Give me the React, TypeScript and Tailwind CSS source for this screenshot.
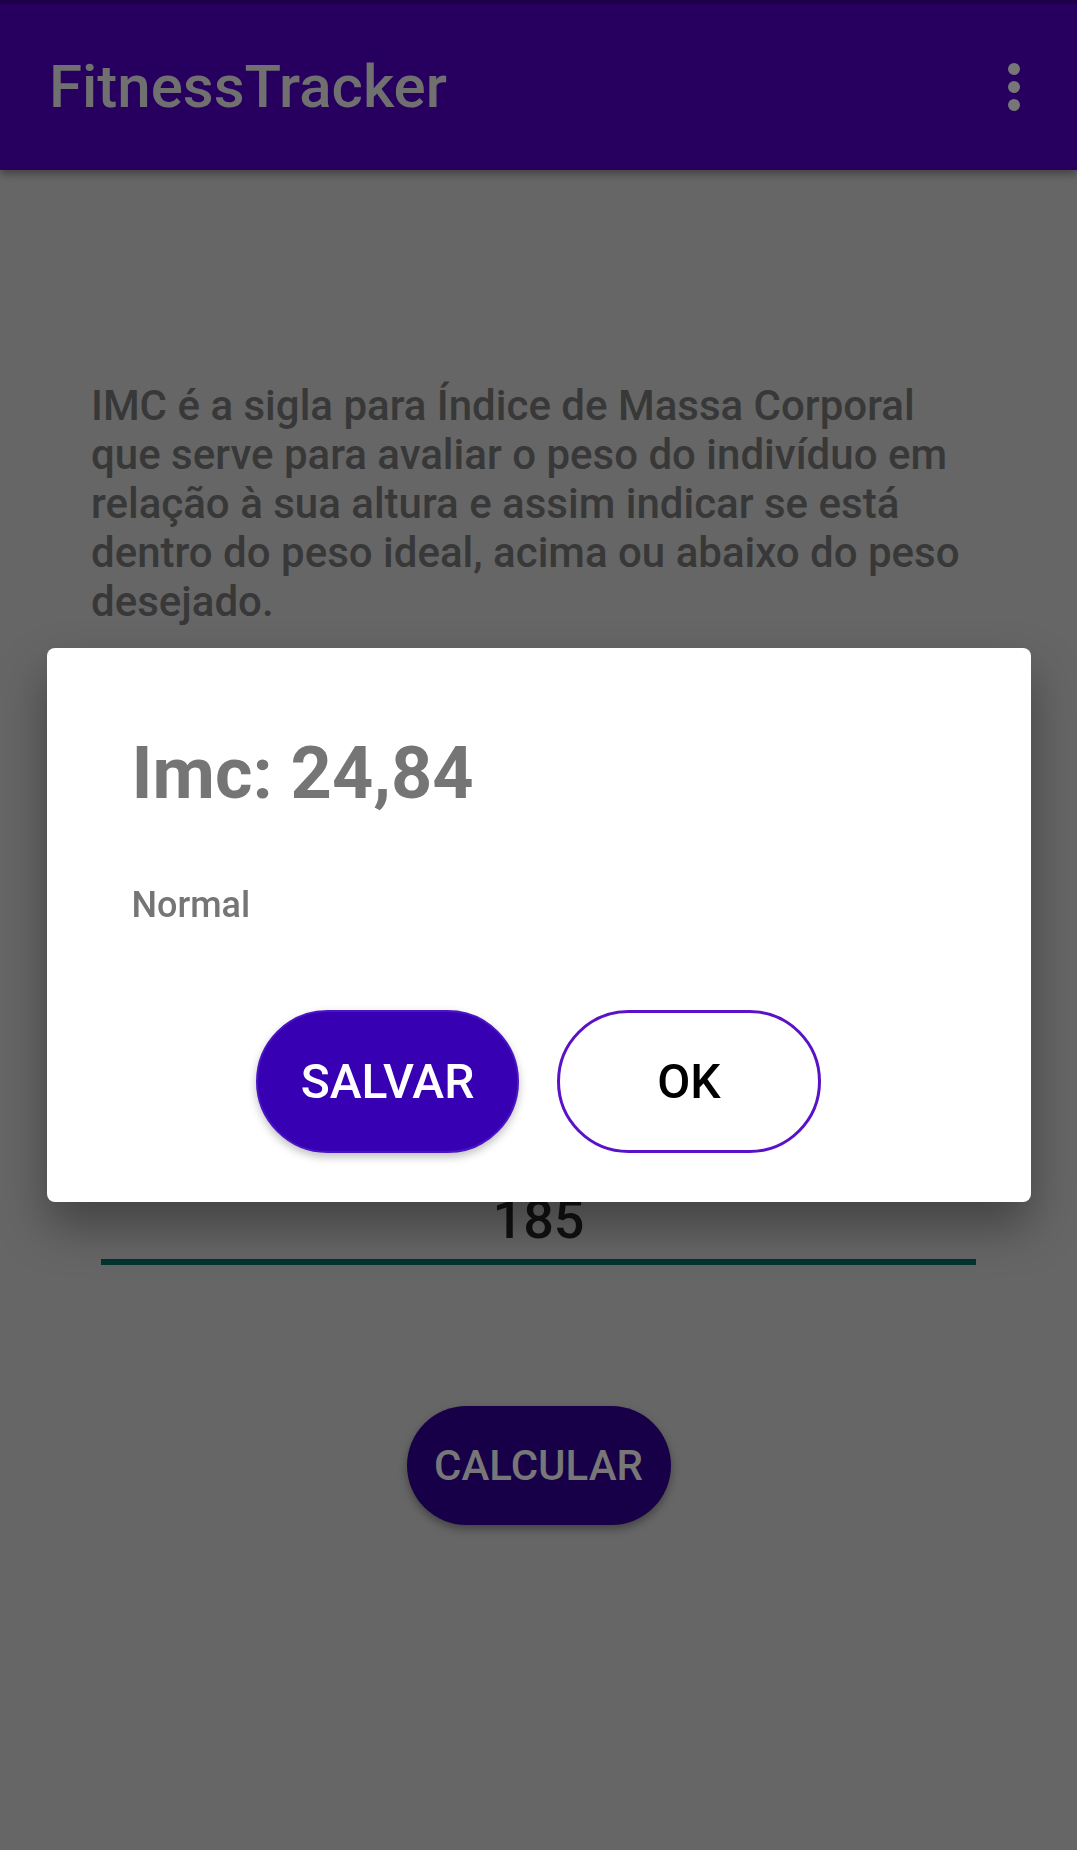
import React from "react"

const roboto = "font-['Roboto','Liberation_Sans',sans-serif]"

function OverflowDots() {
  return (
    <div className="flex flex-col items-center gap-[6px]">
      <span className="block h-[12px] w-[12px] rounded-full bg-[#777777]" />
      <span className="block h-[12px] w-[12px] rounded-full bg-[#777777]" />
      <span className="block h-[12px] w-[12px] rounded-full bg-[#777777]" />
    </div>
  )
}

function ResultDialog() {
  return (
    <div className="fixed inset-0 flex items-center justify-center">
      <div className="flex h-[554px] w-[984px] flex-col rounded-[8px] bg-white px-[85px] pt-[90px] pb-[49px] shadow-[0_24px_48px_rgba(0,0,0,0.35)]">
        <h2 className="text-[72px] leading-none font-bold text-[#757575]">Imc: 24,84</h2>
        <p className="mt-[77px] text-[36px] leading-none font-medium text-[#757575]">Normal</p>
        <div className="mt-[87px] flex justify-center gap-[38px]">
          <button className="flex h-[143px] w-[263px] items-center justify-center rounded-full border-2 border-[#4a14c4] bg-[#3700b3] text-[48px] font-medium text-white shadow-[0_4px_8px_rgba(0,0,0,0.25)]">
            SALVAR
          </button>
          <button className="flex h-[143px] w-[264px] items-center justify-center rounded-full border-[3px] border-[#5a12c8] bg-white text-[48px] font-medium text-black">
            OK
          </button>
        </div>
      </div>
    </div>
  )
}

export default function App() {
  return (
    <div className={`relative min-h-[1850px] w-full bg-[#666666] ${roboto}`}>
      <header className="flex h-[170px] items-center justify-between border-t-[4px] border-[#1e004a] bg-[#27005f] pr-[57px] pl-[49px] shadow-[0_4px_8px_rgba(0,0,0,0.35)]">
        <h1 className="text-[60px] font-medium text-[#707070]">FitnessTracker</h1>
        <OverflowDots />
      </header>

      <main className="flex flex-col">
        <p className="mt-[211px] ml-[91px] w-[885px] text-[42px] leading-[49px] font-medium text-[#383838]">
          IMC é a sigla para Índice de Massa Corporal que serve para avaliar o peso do indivíduo em relação à sua
          altura e assim indicar se está dentro do peso ideal, acima ou abaixo do peso desejado.
        </p>

        <div className="mx-auto mt-[568px] w-[875px] border-b-[6px] border-[#023530] pb-[13px] text-center text-[54px] leading-[52px] font-medium text-[#111111]">
          185
        </div>

        <button className="mx-auto mt-[141px] flex h-[119px] w-[264px] items-center justify-center rounded-full bg-[#180048] text-[42px] font-medium text-[#777777] shadow-[0_4px_8px_rgba(0,0,0,0.35)]">
          CALCULAR
        </button>
      </main>

      <ResultDialog />
    </div>
  )
}
